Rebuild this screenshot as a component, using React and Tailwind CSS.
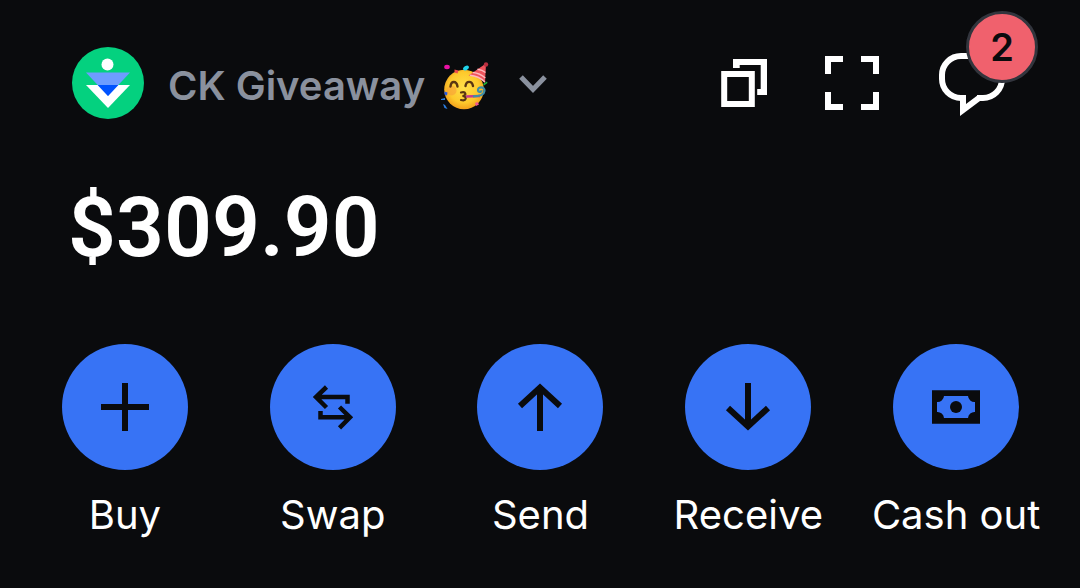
import { useState } from 'react';

function Avatar() {
  return (
    <svg viewBox="0 0 72 72" className="size-18 shrink-0" aria-hidden="true">
      <circle cx="36" cy="36" r="36" fill="#04d17f" />
      <circle cx="35.5" cy="17.5" r="6" fill="#fff" />
      <path d="M14 38h44L36 61z" fill="#fff" />
      <path d="M14 25.5h44L36 49z" fill="#6e9cff" />
      <path d="M25.7 38h20.6L36 49z" fill="#0052ff" />
    </svg>
  );
}

function PartyFace() {
  return (
    <svg viewBox="0 0 48 48" className="size-12 shrink-0" role="img" aria-label="party face">
      <defs>
        <radialGradient id="face" cx="0.5" cy="0.45" r="0.55">
          <stop offset="0" stopColor="#ffe04a" />
          <stop offset="0.7" stopColor="#fdc92c" />
          <stop offset="1" stopColor="#f2a01c" />
        </radialGradient>
      </defs>
      <circle cx="23" cy="27.5" r="19.8" fill="url(#face)" />
      <circle cx="10.5" cy="28.5" r="5" fill="#f59a3a" opacity="0.55" />
      <path d="M27.5 13.5L45 1.5l-1 19.5c-4-4.5-10-7.5-16.5-7.5z" fill="#f0535c" />
      <path d="M32 10.5c5 .5 9 2.5 12.3 5.500M36.5 7.300c3 .4 6 1.600 8 3.200M29 13.300c6 .5 11 3 15 6.700" stroke="#ffb9bd" strokeWidth="1.4" fill="none" />
      <circle cx="45" cy="2.5" r="2.2" fill="#b92f3f" />
      <path d="M9.5 24.5c.5-6 6-6 7 0M24.5 24c.8-5.5 6.5-5.5 7.5 0" stroke="#5a3512" strokeWidth="2.4" fill="none" strokeLinecap="round" />
      <path d="M20 30.5c5-1.5 6 3 1.5 3.5 5 .5 4 5.5-1.5 4" stroke="#5a3512" strokeWidth="2.2" fill="none" strokeLinecap="round" />
      <path d="M25 34.5l14-.5" stroke="#c63a8f" strokeWidth="2.4" />
      <path d="M32 34.3c6 0 11-1 11.5-5.5.3-4.5-6.5-4.5-6.5-.8 0 2.5 3.5 2.5 3.5.3" stroke="#3e8fa8" strokeWidth="2.2" fill="none" />
      <ellipse cx="6" cy="5" rx="2.8" ry="2.2" fill="#ea12a5" />
      <ellipse cx="25" cy="6" rx="3.2" ry="2" fill="#1fd3ea" transform="rotate(-35 25 6)" />
      <path d="M13.5 7.5l4 1-1 3-3-1z" fill="#ef4a4a" />
      <path d="M42 22l4-2.5.5 1.5-3.5 2.5z" fill="#22b53c" />
      <path d="M3.5 29.5l3 1-.5 3-2.5-1z" fill="#2659e0" />
      <path d="M0 37l4-1v2H0zM2 42l2 1 2.5 4-3-1z" fill="#2b7de0" />
      <path d="M34 41l2.5-1 1.5 2.5-3 1.5z" fill="#f0588e" />
    </svg>
  );
}

function CopyIcon() {
  return (
    <svg viewBox="0 0 48 48" className="size-12" aria-hidden="true">
      <rect x="4.2" y="15" width="27.6" height="30" fill="none" stroke="#fff" strokeWidth="6" />
      <path d="M13 0h34v36H37.2v-6h3.500V6H19.700v3H13z" fill="#fff" />
    </svg>
  );
}

function ScanIcon() {
  return (
    <svg viewBox="0 0 56 56" className="size-14" fill="none" stroke="#fff" strokeWidth="6" aria-hidden="true">
      <path d="M19 4H4v15M37 4h15v15M19 52H4V37M37 52h15V37" />
    </svg>
  );
}

function ChatIcon() {
  return (
    <svg viewBox="0 0 72 72" className="size-18" aria-hidden="true">
      <path d="M27 51h-2a19 19 0 0 1-19-19v-4a19 19 0 0 1 19-19h22a19 19 0 0 1 19 19v4a19 19 0 0 1-19 19h-6" fill="none" stroke="#fff" strokeWidth="6" />
      <path d="M24 48v21l20-15v-6h-2L30 57v-9z" fill="#fff" />
    </svg>
  );
}

const actions = [
  {
    label: 'Buy',
    icon: <path d="M24 0v48M0 24h48" strokeWidth="6" />,
  },
  {
    label: 'Swap',
    icon: (
      <path
        d="M17.5 4L7 14l10.5 10.5M7 14h31.500v6.700M30.5 24L41 34.300 30.5 44.800M41 34.300H11.500V28"
        strokeWidth="4.5"
      />
    ),
  },
  {
    label: 'Send',
    icon: <path d="M4 23L24 4.500 44 23M24 5v43" strokeWidth="6" />,
  },
  {
    label: 'Receive',
    icon: <path d="M4 25l20 18.500L44 25M24 43V0" strokeWidth="6" />,
  },
  {
    label: 'Cash out',
    icon: (
      <>
        <path
          d="M0 7.300h48v33.400H0zM12 13a6.500 6.500 0 0 1-7 6v10a6.500 6.500 0 0 1 7 6h24a6.500 6.500 0 0 1 7-6V19a6.500 6.500 0 0 1-7-6z"
          fill="#0a0b0d"
          fillRule="evenodd"
          stroke="none"
        />
        <circle cx="24" cy="24" r="6" fill="#0a0b0d" stroke="none" />
      </>
    ),
  },
];

export default function App() {
  const [unread, setUnread] = useState(2);

  return (
    <main className="min-h-screen bg-[#0a0b0d] pt-[47px] pb-10 font-['Inter',sans-serif] text-white">
      <header className="flex items-center justify-between px-18">
        <button type="button" className="flex items-center">
          <Avatar />
          <span className="ml-6 flex items-center gap-4 pt-1.5">
            <span className="text-[40px] leading-12 font-semibold text-[#8a919e]">CK Giveaway</span>
            <PartyFace />
          </span>
          <svg viewBox="0 0 32 32" className="ml-7 size-8" fill="none" stroke="#8a919e" strokeWidth="5" aria-hidden="true">
            <path d="M4 10l12 12.500L28 10" />
          </svg>
        </button>

        <div className="flex items-center gap-14">
          <button type="button" aria-label="Copy address">
            <CopyIcon />
          </button>
          <button type="button" aria-label="Scan">
            <ScanIcon />
          </button>
          <button type="button" aria-label="Messages" className="relative" onClick={() => setUnread(0)}>
            <ChatIcon />
            {unread > 0 && (
              <span className="absolute -top-9 -right-[30px] flex size-18 items-center justify-center rounded-full border-3 border-[#32353d] bg-[#f0616d] text-[38px] font-semibold text-[#0a0b0d]">
                {unread}
              </span>
            )}
          </button>
        </div>
      </header>

      <h1 className="mt-[59px] px-17 font-['Roboto',sans-serif] text-[84px] leading-[100px] font-semibold">$309.90</h1>

      <nav className="mt-[66px] grid grid-cols-5 pr-5 pl-[21px]">
        {actions.map((action) => (
          <button key={action.label} type="button" className="flex flex-col items-center gap-5">
            <span className="flex size-[126px] items-center justify-center rounded-full bg-[#3773f5]">
              <svg viewBox="0 0 48 48" className="size-12" fill="none" stroke="#0a0b0d" aria-hidden="true">
                {action.icon}
              </svg>
            </span>
            <span className="text-[40px] leading-[50px] whitespace-nowrap">{action.label}</span>
          </button>
        ))}
      </nav>
    </main>
  );
}
